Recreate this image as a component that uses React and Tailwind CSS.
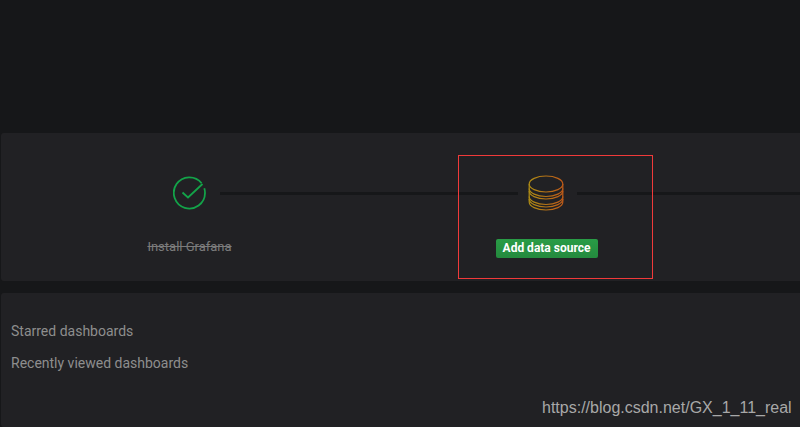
const CheckIcon = () => (
  <svg width="34" height="34" viewBox="0 0 34 34" fill="none" className="ml-px block shrink-0">
    <path
      d="M28.6 7.200A15.600 15.600 0 1 0 32 17c0-1.800-.2-3.200-.7-4.700"
      stroke="#13a349"
      strokeWidth="1.800"
    />
    <path d="M9.500 16.500L15 21.500L29.500 8" stroke="#13a349" strokeWidth="1.800" />
  </svg>
);

const DatabaseIcon = () => (
  <svg width="36" height="36" viewBox="0 0 36 36" fill="none" className="block shrink-0">
    <defs>
      <linearGradient id="dbOrange" x1="0" y1="0" x2="1" y2="0">
        <stop offset="0" stopColor="#ad8a14" />
        <stop offset="1" stopColor="#bd5a18" />
      </linearGradient>
    </defs>
    <g stroke="url(#dbOrange)" strokeWidth="1.200">
      <ellipse cx="18" cy="9" rx="16.800" ry="8" />
      <path d="M1.200 9v18c0 4.400 7.500 8 16.800 8s16.800-3.600 16.800-8V9" />
      <path d="M1.200 13.500c0 4.400 7.500 8 16.800 8s16.800-3.600 16.800-8" />
      <path d="M1.200 16c0 4.400 7.500 8 16.800 8s16.800-3.600 16.800-8" />
      <path d="M1.200 21.500c0 4.400 7.500 8 16.800 8s16.800-3.600 16.800-8" />
      <path d="M1.200 24c0 4.400 7.500 8 16.800 8s16.800-3.600 16.800-8" />
    </g>
  </svg>
);

const App = () => {
  return (
    <div className="relative h-[427px] w-[800px] overflow-hidden bg-[#161719] font-['Roboto',sans-serif]">
      <div className="h-[133px]" />

      <section className="ml-px h-[148px] rounded-l-[3px] bg-[#212124] pt-[42px]">
        <div className="flex h-[36px] items-center pl-[171px]">
          <CheckIcon />
          <div className="ml-[13px] h-[3px] w-[298px] bg-[#161719]" />
          <div className="ml-[10px]">
            <DatabaseIcon />
          </div>
          <div className="ml-[13px] h-[3px] flex-1 bg-[#161719]" />
        </div>

        <div className="mt-[26px] flex items-start pl-[10px]">
          <div className="mt-[2px] w-[357px] text-center text-[13px] leading-[15px] text-[#7b7b7b] line-through">
            Install Grafana
          </div>
          <div className="mt-[2px] flex w-[357px] justify-center">
            <button className="h-[19px] w-[102px] rounded-[2px] bg-gradient-to-b from-[#299c46] to-[#248a3e] text-[12px] leading-[19px] font-bold text-white">
              Add data source
            </button>
          </div>
        </div>
      </section>

      <section className="mt-[12px] ml-px h-[134px] rounded-l-[3px] bg-[#212124] px-[10px] pt-[29px] text-[14px] leading-[18px] text-[#8e8e8e]">
        <div>Starred dashboards</div>
        <div className="mt-[14px]">Recently viewed dashboards</div>
      </section>

      {/* annotation box and blog watermark sit on top of the page */}
      <div className="absolute top-[155px] left-[458px] h-[124px] w-[195px] border border-[#f03a3a]" />
      <div className="absolute top-[399px] left-[542px] font-['Liberation_Sans',sans-serif] text-[16px] leading-[18px] text-[#a8a8a8]">
        https://blog.csdn.net/GX_1_11_real
      </div>
    </div>
  );
};

export default App;
